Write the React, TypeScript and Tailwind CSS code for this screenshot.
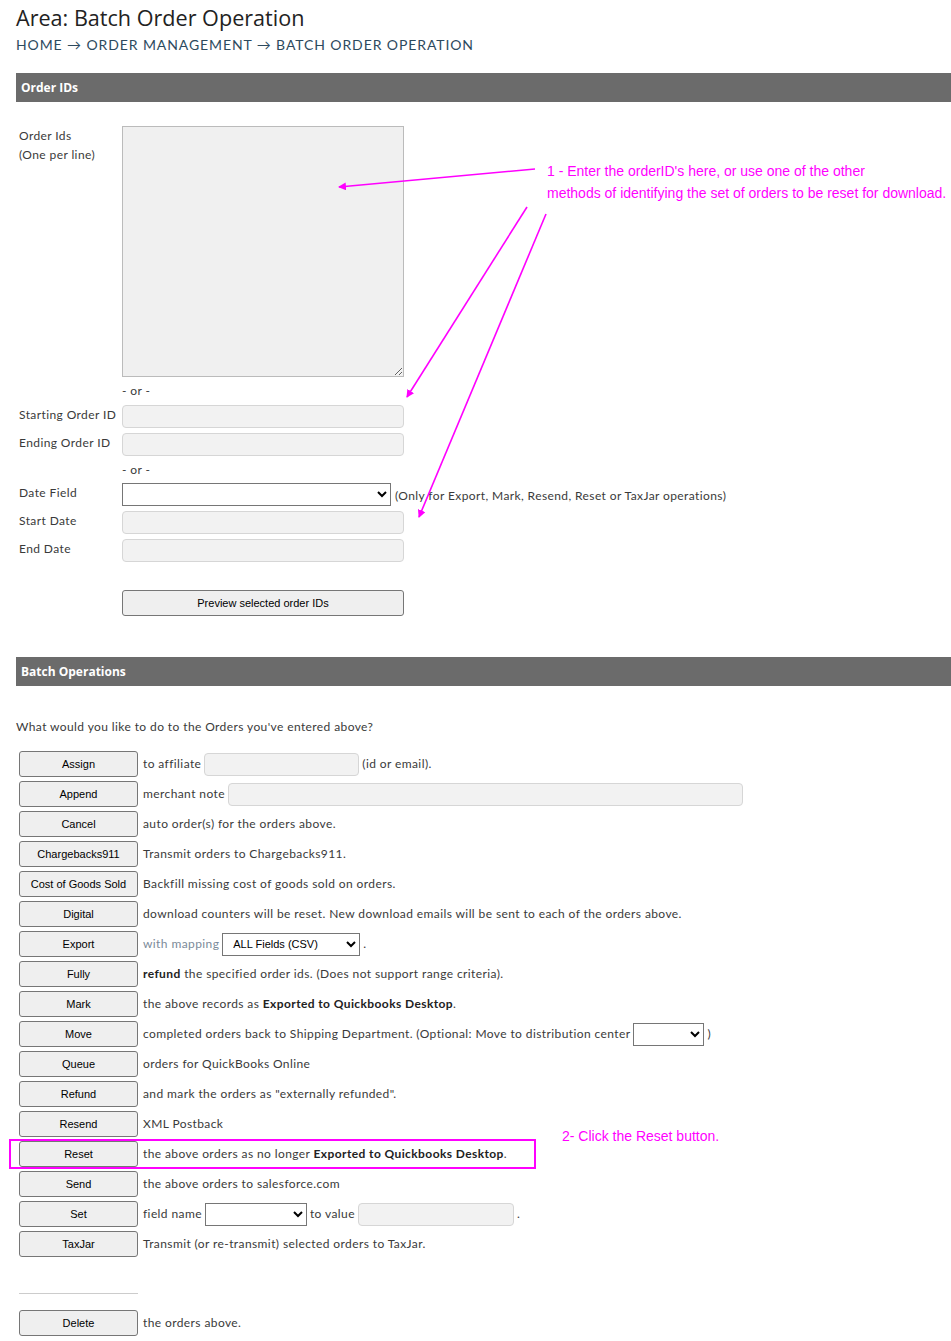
import React from "react";

const btn =
  "h-[26px] w-[119px] shrink-0 rounded-[3px] border border-[#767676] bg-[#efefef] font-['Liberation_Sans',Arial,sans-serif] text-[11px] tracking-normal text-black";
const field = "h-[23px] rounded-[4px] border border-[#d6d6d6] bg-[#f2f2f2]";
const sel = "h-[23px] border border-[#767676] bg-white font-['Liberation_Sans',Arial,sans-serif] text-[11px] tracking-normal text-black";

const Row = ({ label, children, danger }: { label: string; children?: React.ReactNode; danger?: boolean }) => (
  <div className="flex items-center gap-[5px]">
    <button className={btn + (danger ? " text-[#a00000]" : "")}>{label}</button>
    <div className="flex items-center gap-[3px]">{children}</div>
  </div>
);

const Label = ({ children }: { children: React.ReactNode }) => (
  <div className="w-[106px] shrink-0 pl-[3px] leading-[19px]">{children}</div>
);

export default function App() {
  return (
    <div className="relative min-h-[1341px] w-[951px] overflow-hidden bg-white font-['Lato',sans-serif] text-[12px] tracking-[0.4px] text-[#3a3a3a]">
      <div className="pl-4 pt-1">
        <h1 className="font-['Open_Sans',sans-serif] text-[21.6px] leading-[27px] tracking-normal text-[#222]">
          Area: Batch Order Operation
        </h1>
        <div className="mt-[4px] text-[14px] leading-[20px] tracking-[0.9px] text-[#2d4a5e]">
          HOME → ORDER MANAGEMENT → BATCH ORDER OPERATION
        </div>

        <div className="mt-[18px] flex h-[29px] items-center bg-[#6b6b6b] pl-[5px] font-['Open_Sans',sans-serif] text-[12px] font-bold tracking-normal text-white">
          Order IDs
        </div>

        <div className="mt-6 flex flex-col">
          <div className="flex">
            <Label>
              Order Ids
              <br />
              (One per line)
            </Label>
            <textarea className="h-[251px] w-[282px] border border-[#bbbbbb] bg-[#f0f0f0]" />
          </div>
          <div className="flex h-[28px] items-center pl-[106px]">- or -</div>
          <div className="flex flex-col gap-[5px]">
            <div className="flex">
              <Label>Starting Order ID</Label>
              <input className={field + " w-[282px]"} />
            </div>
            <div className="flex">
              <Label>Ending Order ID</Label>
              <input className={field + " w-[282px]"} />
            </div>
          </div>
          <div className="flex h-[27px] items-center pl-[106px]">- or -</div>
          <div className="flex flex-col gap-[5px]">
            <div className="flex items-start">
              <Label>Date Field</Label>
              <select className={sel + " w-[269px]"}>
                <option></option>
              </select>
              <span className="ml-[4px] mt-[4px]">(Only for Export, Mark, Resend, Reset or TaxJar operations)</span>
            </div>
            <div className="flex">
              <Label>Start Date</Label>
              <input className={field + " w-[282px]"} />
            </div>
            <div className="flex">
              <Label>End Date</Label>
              <input className={field + " w-[282px]"} />
            </div>
          </div>
          <div className="mt-[28px] pl-[106px]">
            <button className={btn + " w-[282px]"}>Preview selected order IDs</button>
          </div>
        </div>

        <div className="mt-[41px] flex h-[29px] items-center bg-[#6b6b6b] pl-[5px] font-['Open_Sans',sans-serif] text-[12px] font-bold tracking-normal text-white">
          Batch Operations
        </div>

        <div className="mt-[32px] leading-[18px]">What would you like to do to the Orders you've entered above?</div>

        <div className="mt-[15px] flex flex-col gap-[4px] pl-[3px]">
          <Row label="Assign">
            <span>to affiliate</span>
            <input className={field + " w-[155px]"} />
            <span>(id or email).</span>
          </Row>
          <Row label="Append">
            <span>merchant note</span>
            <input className={field + " w-[515px]"} />
          </Row>
          <Row label="Cancel">auto order(s) for the orders above.</Row>
          <Row label="Chargebacks911">Transmit orders to Chargebacks911.</Row>
          <Row label="Cost of Goods Sold">Backfill missing cost of goods sold on orders.</Row>
          <Row label="Digital">download counters will be reset. New download emails will be sent to each of the orders above.</Row>
          <Row label="Export">
            <span className="text-[#7b8a99]">with mapping</span>
            <select className={sel + " w-[138px] pl-[6px]"}>
              <option>ALL Fields (CSV)</option>
            </select>
            <span>.</span>
          </Row>
          <Row label="Fully">
            <span>
              <b className="text-[#222]">refund</b> the specified order ids. (Does not support range criteria).
            </span>
          </Row>
          <Row label="Mark">
            <span>
              the above records as <b className="text-[#222]">Exported to Quickbooks Desktop</b>.
            </span>
          </Row>
          <Row label="Move">
            <span>completed orders back to Shipping Department. (Optional: Move to distribution center</span>
            <select className={sel + " w-[71px]"}>
              <option></option>
            </select>
            <span>)</span>
          </Row>
          <Row label="Queue">orders for QuickBooks Online</Row>
          <Row label="Refund">and mark the orders as "externally refunded".</Row>
          <Row label="Resend">XML Postback</Row>
          <div className="relative">
            <Row label="Reset">
              <span>
                the above orders as no longer <b className="text-[#222]">Exported to Quickbooks Desktop</b>.
              </span>
            </Row>
            <div className="pointer-events-none absolute left-[-10px] top-[-2px] h-[30px] w-[527px] border-2 border-[#ff00ff]" />
            <div className="absolute left-[543px] top-[-15px] whitespace-nowrap font-['Liberation_Sans',Arial,sans-serif] text-[14px] tracking-normal text-[#ff00ff]">
              2- Click the Reset button.
            </div>
          </div>
          <Row label="Send">the above orders to salesforce.com</Row>
          <Row label="Set">
            <span>field name</span>
            <select className={sel + " w-[102px]"}>
              <option></option>
            </select>
            <span>to value</span>
            <input className={field + " w-[156px]"} />
            <span>.</span>
          </Row>
          <Row label="TaxJar">Transmit (or re-transmit) selected orders to TaxJar.</Row>
        </div>

        <div className="ml-[3px] mt-[36px] h-px w-[119px] bg-[#cccccc]" />
        <div className="mt-[16px] pl-[3px]">
          <Row label="Delete" danger>
            the orders above.
          </Row>
        </div>
      </div>

      <div className="absolute left-[547px] top-[160px] font-['Liberation_Sans',Arial,sans-serif] text-[14px] leading-[22px] tracking-normal text-[#ff00ff]">
        1 - Enter the orderID's here, or use one of the other
        <br />
        methods of identifying the set of orders to be reset for download.
      </div>

      <svg className="pointer-events-none absolute left-0 top-0" width="951" height="1341">
        <defs>
          <marker id="ah" markerWidth="8" markerHeight="8" refX="7" refY="4" orient="auto" markerUnits="userSpaceOnUse">
            <path d="M0,0 L8,4 L0,8 Z" fill="#ff00ff" />
          </marker>
        </defs>
        <g stroke="#ff00ff" strokeWidth="1.6" fill="none">
          <line x1="535" y1="169" x2="339" y2="187" markerEnd="url(#ah)" />
          <line x1="527" y1="207" x2="407" y2="397" markerEnd="url(#ah)" />
          <line x1="546" y1="214" x2="419" y2="517" markerEnd="url(#ah)" />
        </g>
      </svg>
    </div>
  );
}
